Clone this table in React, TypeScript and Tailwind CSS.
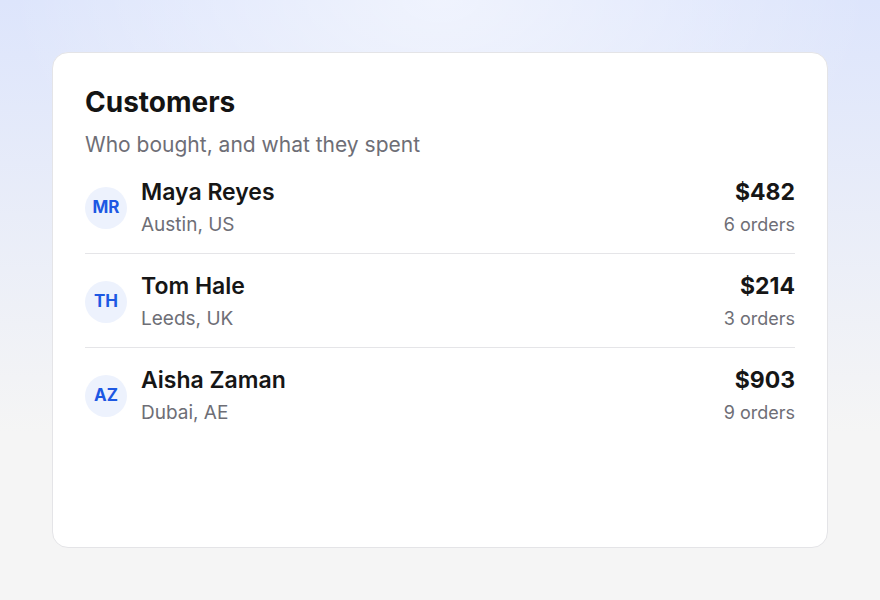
import React from "react";

interface Customer {
  initials: string;
  name: string;
  location: string;
  spent: string;
  orders: number;
}

const customers: Customer[] = [
  { initials: "MR", name: "Maya Reyes", location: "Austin, US", spent: "$482", orders: 6 },
  { initials: "TH", name: "Tom Hale", location: "Leeds, UK", spent: "$214", orders: 3 },
  { initials: "AZ", name: "Aisha Zaman", location: "Dubai, AE", spent: "$903", orders: 9 },
];

export default function App() {
  return (
    <div
      className="w-[880px] h-[600px] p-[52px] bg-[#f5f5f5] bg-[radial-gradient(ellipse_70%_60%_at_top,rgba(255,255,255,0.55),transparent_70%),linear-gradient(to_bottom,#dde5fc,#f5f5f5_72%)]"
      style={{ fontFamily: "Inter, 'Noto Sans', sans-serif" }}
    >
      <div className="h-full bg-white border border-[#e4e4e7] rounded-2xl p-8">
        <h1 className="text-[28px] leading-[34px] font-bold text-[#141414]">Customers</h1>
        <p className="mt-3 text-[21px] leading-7 text-[#6e6e76]">Who bought, and what they spent</p>
        <div className="mt-px">
          {customers.map((c, i) => (
            <div
              key={c.name}
              className={`flex items-center gap-[14px] pt-[18px] pb-[15px] ${i < customers.length - 1 ? "border-b border-[#e5e5e8]" : ""}`}
            >
              <div className="w-[42px] h-[42px] rounded-full bg-[#edf2fd] flex items-center justify-center text-[17px] font-bold text-[#1d58e3]">
                {c.initials}
              </div>
              <div className="flex-1">
                <div className="text-[23px] leading-7 font-semibold text-[#161616]">{c.name}</div>
                <div className="mt-[6px] text-[19px] leading-[26px] text-[#6e6e76]">{c.location}</div>
              </div>
              <div className="text-right">
                <div className="text-[23px] leading-7 font-bold text-[#161616]">{c.spent}</div>
                <div className="mt-[6px] text-[18px] leading-[26px] text-[#6e6e76]">{c.orders} orders</div>
              </div>
            </div>
          ))}
        </div>
      </div>
    </div>
  );
}
